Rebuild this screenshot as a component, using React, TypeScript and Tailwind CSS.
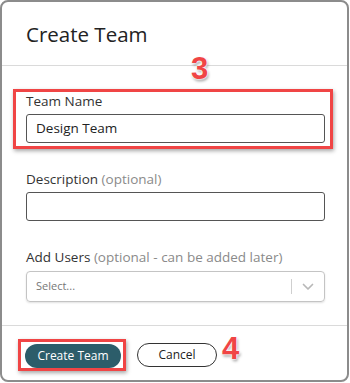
import React from "react";

const font = { fontFamily: '"Open Sans", "Noto Sans", Arial, sans-serif' };
const annot =
  "[text-shadow:0_0_2px_#fff,0_0_2px_#fff,0_0_3px_#fff,1px_2px_3px_rgba(0,0,0,0.45)]";

export default function App() {
  return (
    <div className="relative w-[350px] h-[383px] bg-white" style={font}>
      <div className="w-[349px] h-[382px] rounded-lg border-2 border-[#8c8c8c] bg-white flex flex-col overflow-hidden">
        {/* header */}
        <div className="h-[63px] pl-[24px] pt-[18px] shrink-0">
          <h1 className="text-[20.5px] leading-[28px] text-[#222]">Create Team</h1>
        </div>
        <div className="h-px bg-[#dadada] shrink-0" />
        {/* body */}
        <div className="pl-[24px] pr-[22px] flex flex-col shrink-0">
          <div className="relative mt-[26px] flex flex-col">
            <label className="text-[13.5px] leading-[18px] text-[#333]">Team Name</label>
            <div className="mt-[4px] h-[29px] rounded-[3px] border border-[#555] flex items-center pl-[9px] text-[13.5px] text-[#222]">
              Design Team
            </div>
            <div className="absolute left-[-13px] top-[-3px] w-[320px] h-[60px] border-[3px] border-[#f04545] shadow-[1px_2px_4px_rgba(0,0,0,0.35)] pointer-events-none" />
          </div>
          <div className="mt-[27px] flex flex-col">
            <label className="text-[13.5px] leading-[18px] text-[#333]">
              Description <span className="text-[#8a8a8a]">(optional)</span>
            </label>
            <div className="mt-[4px] h-[29px] rounded-[3px] border border-[#555]" />
          </div>
          <div className="mt-[27px] flex flex-col">
            <label className="text-[13.5px] leading-[18px] text-[#333]">
              Add Users <span className="text-[#8a8a8a]">(optional - can be added later)</span>
            </label>
            <div className="mt-[5px] h-[31px] rounded-[4px] border border-[#c4c4c4] shadow-[0_1px_2px_rgba(0,0,0,0.12)] flex items-center">
              <span className="pl-[9px] flex-1 text-[11px] text-[#777]">Select...</span>
              <div className="w-px h-[15px] bg-[#cfcfcf]" />
              <div className="w-[32px] flex items-center justify-center">
                <svg width="12" height="8" viewBox="0 0 12 8" fill="none">
                  <path d="M1.5 1.5 L6 6 L10.5 1.5" stroke="#b8b8b8" strokeWidth="1.7" strokeLinecap="round" strokeLinejoin="round" />
                </svg>
              </div>
            </div>
          </div>
        </div>
        <div className="mt-[23px] h-px bg-[#dadada] shrink-0" />
        {/* footer */}
        <div className="pl-[23px] pt-[16px] flex items-center gap-[16px] relative">
          <div className="relative">
            <button className="w-[96px] h-[24px] rounded-full bg-[#2c5d6a] text-white text-[12px] leading-none">
              Create Team
            </button>
            <div className="absolute left-[-7px] top-[-3px] w-[108px] h-[32px] border-[3px] border-[#f04545] shadow-[1px_2px_4px_rgba(0,0,0,0.35)] pointer-events-none" />
          </div>
          <button className="w-[80px] h-[24px] rounded-full bg-white border border-[#333] text-[#222] text-[12px] leading-none">
            Cancel
          </button>
        </div>
      </div>
      {/* annotation numbers */}
      <div
        className={`absolute left-[191px] top-[52px] text-[31px] leading-[34px] font-bold text-[#f04545] ${annot}`}
        style={{ fontFamily: '"Liberation Sans", Arial, sans-serif' }}
      >
        3
      </div>
      <div
        className={`absolute left-[222px] top-[331px] text-[31px] leading-[35px] font-bold text-[#f04545] ${annot}`}
        style={{ fontFamily: '"Liberation Sans", Arial, sans-serif' }}
      >
        4
      </div>
    </div>
  );
}
